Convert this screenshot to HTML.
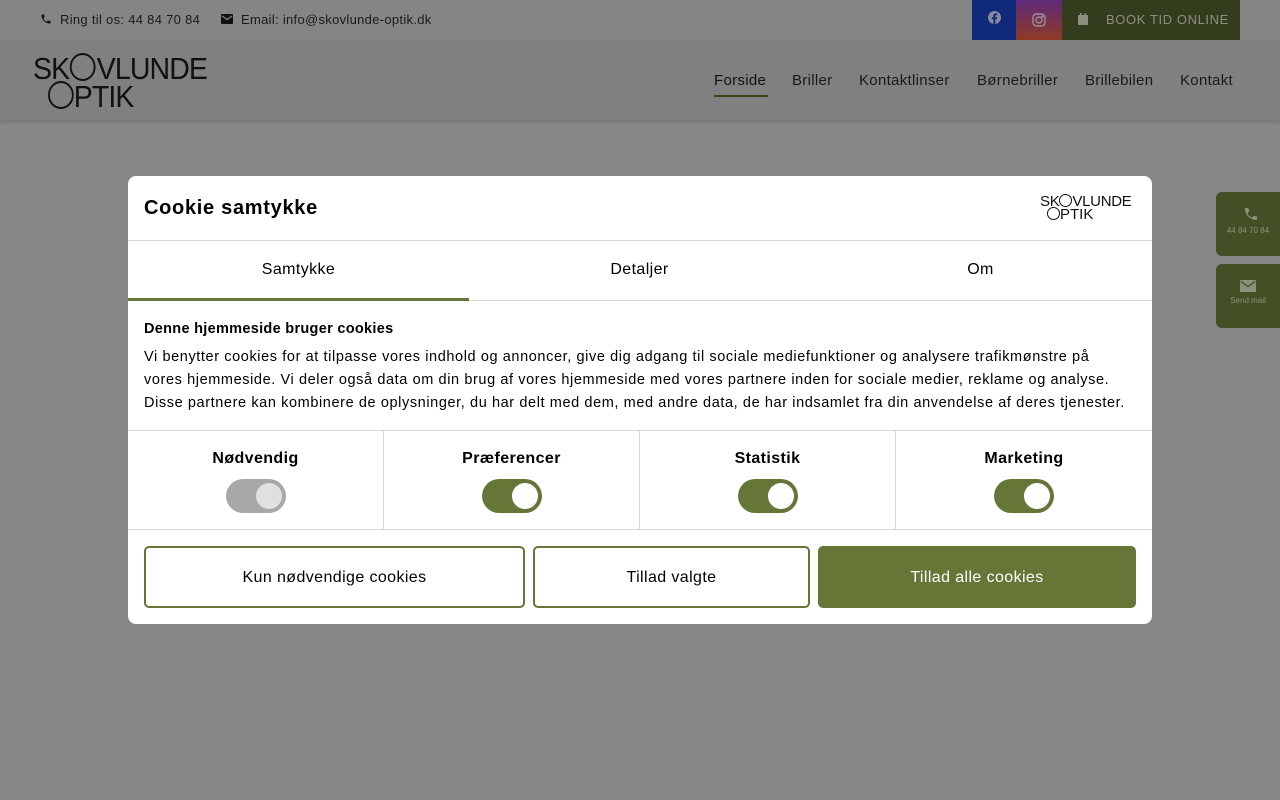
<!DOCTYPE html>
<html><head><meta charset="utf-8"><style>
*{box-sizing:border-box;margin:0;padding:0}
body{width:1280px;height:800px;overflow:hidden;background:#878787;font-family:"Liberation Sans",sans-serif;position:relative;color:#000}
.top{position:absolute;left:0;top:0;width:1280px;height:40px;background:#858585}
.top span{position:absolute;top:12px;font-size:13px;color:#1a1a1a;letter-spacing:.3px}
.hdr{position:absolute;left:0;top:40px;width:1280px;height:80px;background:#808080;box-shadow:0 2px 4px rgba(0,0,0,.15)}
.nav{position:absolute;top:72px;font-size:15px;color:#1a1a1a;letter-spacing:.3px}
.logo{position:absolute;font-family:"Liberation Sans",sans-serif;color:#111;line-height:1;white-space:nowrap}
.modal{position:absolute;left:128px;top:176px;width:1024px;height:448px;background:#fff;border-radius:8px;overflow:hidden}
.tabs{position:absolute;top:64px;left:0;width:1024px;height:61px;border-top:1px solid #d6d6d6;border-bottom:1px solid #d6d6d6}
.tab{position:absolute;top:0;height:60px;width:341px;text-align:center;line-height:58px;font-size:16px;letter-spacing:.4px}
.cats{position:absolute;top:254px;left:0;width:1024px;height:100px;border-top:1px solid #d6d6d6;border-bottom:1px solid #d6d6d6}
.cat{position:absolute;top:0;width:256px;height:98px;text-align:center;border-right:1px solid #d6d6d6}
.cat b{display:block;margin-top:19px;font-size:16px;letter-spacing:.4px}
.tg{position:relative;display:block;width:60px;height:34px;border-radius:17px;background:#667637;margin:11px auto 0}
.tg i{position:absolute;right:4px;top:4px;width:26px;height:26px;border-radius:50%;background:#fff}
.btn{position:absolute;top:370px;height:62px;border:2px solid #667637;border-radius:5px;text-align:center;line-height:60px;font-size:16px;letter-spacing:.4px}
.side{position:absolute;left:1216px;width:70px;height:64px;background:#435025;border-radius:6px;color:#8a9178;font-size:8px;text-align:center}
</style></head><body>
<div class="top">
<svg style="position:absolute;left:40px;top:13px" width="12" height="12" viewBox="0 0 24 24"><path fill="#111" d="M6.6 10.8a15 15 0 006.6 6.6l2.2-2.2c.3-.3.7-.4 1-.2 1.1.4 2.3.6 3.6.6.6 0 1 .4 1 1V20c0 .6-.4 1-1 1C10.6 21 3 13.4 3 4c0-.6.4-1 1-1h3.5c.6 0 1 .4 1 1 0 1.3.2 2.5.6 3.6.1.3 0 .7-.2 1z"/></svg>
<span style="left:60px">Ring til os: 44 84 70 84</span>
<svg style="position:absolute;left:221px;top:14px" width="12" height="10" viewBox="0 0 12 10"><rect width="12" height="10" rx="1" fill="#111"/><path d="M1 2l5 3.5L11 2" stroke="#858585" stroke-width="1.2" fill="none"/></svg>
<span style="left:241px">Email: info@skovlunde-optik.dk</span>
<div style="position:absolute;left:972px;top:0;width:44px;height:40px;background:#10297a"><svg style="position:absolute;left:16px;top:11px" width="13" height="13" viewBox="0 0 24 24"><circle cx="12" cy="12" r="12" fill="#858b9e"/><path d="M13.5 24v-9h3l.5-3.5h-3.5V9.3c0-1 .3-1.7 1.8-1.7h1.9V4.5c-.3 0-1.5-.2-2.8-.2-2.8 0-4.6 1.7-4.6 4.8v2.4H7V15h3v9z" fill="#10297a"/></svg></div>
<div style="position:absolute;left:1016px;top:0;width:46px;height:40px;background:linear-gradient(#5d2a7a,#8e3a24)"><svg style="position:absolute;left:16px;top:13px" width="14" height="14" viewBox="0 0 14 14" fill="none" stroke="#a08d9a" stroke-width="1.4"><rect x="1" y="1" width="12" height="12" rx="3.5"/><circle cx="7" cy="7" r="3"/><circle cx="10.5" cy="3.5" r=".5" fill="#a08d9a"/></svg></div>
<div style="position:absolute;left:1062px;top:0;width:178px;height:40px;background:#333c1c"><svg style="position:absolute;left:16px;top:13px" width="10" height="12" viewBox="0 0 10 12"><rect y="2" width="10" height="10" rx="1" fill="#8c8f82"/><rect x="2" y="0" width="1.5" height="3" fill="#8c8f82"/><rect x="6.5" y="0" width="1.5" height="3" fill="#8c8f82"/></svg><span style="position:absolute;left:44px;top:12px;font-size:13px;color:#8c8f82;letter-spacing:.6px">BOOK TID ONLINE</span></div>
</div>
<div class="hdr">
<div class="logo" style="left:33px;top:13px;font-size:31px;letter-spacing:-1px;transform:scaleX(.92);transform-origin:left">SK<span style="display:inline-block;width:28px;height:28px;border:2.4px solid #111;border-radius:50%;vertical-align:-2px;margin:0 1px"></span>VLUNDE</div>
<div class="logo" style="left:48px;top:41px;font-size:31px;letter-spacing:-1px;transform:scaleX(.92);transform-origin:left"><span style="display:inline-block;width:28px;height:28px;border:2.4px solid #111;border-radius:50%;vertical-align:-2px"></span>PTIK</div>
</div>
<span class="nav" style="left:714px;color:#111">Forside</span>
<div style="position:absolute;left:714px;top:95px;width:54px;height:2px;background:#3a4518"></div>
<span class="nav" style="left:792px">Briller</span>
<span class="nav" style="left:859px">Kontaktlinser</span>
<span class="nav" style="left:977px">Børnebriller</span>
<span class="nav" style="left:1085px">Brillebilen</span>
<span class="nav" style="left:1180px">Kontakt</span>

<div class="side" style="top:192px"><svg style="margin-top:14px" width="16" height="16" viewBox="0 0 24 24"><path fill="#8a9178" d="M6.6 10.8a15 15 0 006.6 6.6l2.2-2.2c.3-.3.7-.4 1-.2 1.1.4 2.3.6 3.6.6.6 0 1 .4 1 1V20c0 .6-.4 1-1 1C10.6 21 3 13.4 3 4c0-.6.4-1 1-1h3.5c.6 0 1 .4 1 1 0 1.3.2 2.5.6 3.6.1.3 0 .7-.2 1z"/></svg><div style="margin-top:2px;margin-right:6px">44 84 70 84</div></div>
<div class="side" style="top:264px"><svg style="margin-top:16px;margin-right:6px" width="16" height="12" viewBox="0 0 16 12"><rect width="16" height="12" rx="1" fill="#8a9178"/><path d="M1 1.5l7 5 7-5" stroke="#435025" stroke-width="1.3" fill="none"/></svg><div style="margin-top:2px;margin-right:6px">Send mail</div></div>

<div class="modal">
<div style="position:absolute;left:16px;top:21px;font-size:20px;font-weight:bold;letter-spacing:.7px">Cookie samtykke</div>
<div class="logo" style="left:912px;top:18px;font-size:15px;letter-spacing:-.3px">SK<span style="display:inline-block;width:13px;height:13px;border:1.3px solid #111;border-radius:50%;vertical-align:-1px"></span>VLUNDE</div>
<div class="logo" style="left:919px;top:31px;font-size:15px"><span style="display:inline-block;width:13px;height:13px;border:1.3px solid #111;border-radius:50%;vertical-align:-1px"></span>PTIK</div>
<div class="tabs">
<div class="tab" style="left:0">Samtykke</div>
<div style="position:absolute;left:0;top:57px;width:341px;height:3px;background:#667637"></div>
<div class="tab" style="left:341px">Detaljer</div>
<div class="tab" style="left:682px">Om</div>
</div>
<div style="position:absolute;left:16px;top:145px;font-size:14.5px;font-weight:bold;letter-spacing:.3px">Denne hjemmeside bruger cookies</div>
<div style="position:absolute;left:16px;top:170px;font-size:14.5px;line-height:23px;width:1010px;letter-spacing:.6px;white-space:nowrap">Vi benytter cookies for at tilpasse vores indhold og annoncer, give dig adgang til sociale mediefunktioner og analysere trafikmønstre på<br>vores hjemmeside. Vi deler også data om din brug af vores hjemmeside med vores partnere inden for sociale medier, reklame og analyse.<br>Disse partnere kan kombinere de oplysninger, du har delt med dem, med andre data, de har indsamlet fra din anvendelse af deres tjenester.</div>
<div class="cats">
<div class="cat" style="left:0"><b>Nødvendig</b><span class="tg" style="background:#a8a8a8"><i style="background:#e0e0e0"></i></span></div>
<div class="cat" style="left:256px"><b>Præferencer</b><span class="tg"><i></i></span></div>
<div class="cat" style="left:512px"><b>Statistik</b><span class="tg"><i></i></span></div>
<div class="cat" style="left:768px;border:none"><b>Marketing</b><span class="tg"><i></i></span></div>
</div>
<div class="btn" style="left:16px;width:381px">Kun nødvendige cookies</div>
<div class="btn" style="left:405px;width:277px">Tillad valgte</div>
<div class="btn" style="left:690px;width:318px;background:#667637;color:#fff">Tillad alle cookies</div>
</div>
</body></html>
